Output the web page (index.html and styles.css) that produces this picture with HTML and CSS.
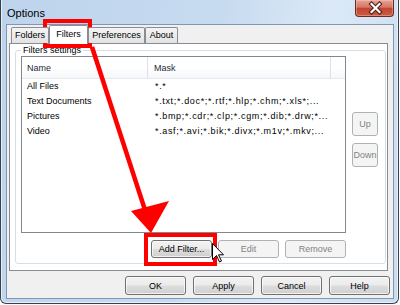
FILE: index.html
```html
<!DOCTYPE html>
<html lang="en">
<head>
    <meta charset="UTF-8">
    <title>Options</title>
    <link rel="stylesheet" href="styles.css">
</head>
<body>
    <div class="screen">
        <div class="window">
            <div class="titlebar">
                <span class="title">Options</span>
                <div class="close">
                    <svg width="39" height="16" viewBox="0 0 39 16">
                        <path d="M15.5 4 L23.5 12 M23.5 4 L15.5 12" stroke="#4a1a14" stroke-width="4.2" stroke-linecap="square" fill="none"/>
                        <path d="M15.5 4 L23.5 12 M23.5 4 L15.5 12" stroke="#fff" stroke-width="2.2" stroke-linecap="square" fill="none"/>
                    </svg>
                </div>
            </div>
            <div class="client">
                <div class="tabctl">
                    <div class="tabs">
                        <div class="tab tab-folders">Folders</div>
                        <div class="tab tab-filters active">Filters</div>
                        <div class="tab tab-prefs">Preferences</div>
                        <div class="tab tab-about">About</div>
                    </div>
                    <div class="tabpanel">
                        <fieldset class="group">
                            <legend>Filters settings</legend>
                            <div class="group-body">
                                <div class="listview">
                                    <div class="lv-header">
                                        <div class="col-name">Name</div>
                                        <div class="col-mask">Mask</div>
                                        <div class="col-rest"></div>
                                    </div>
                                    <div class="lv-row">
                                        <div class="col-name">All Files</div>
                                        <div class="col-mask">*.*</div>
                                    </div>
                                    <div class="lv-row">
                                        <div class="col-name">Text Documents</div>
                                        <div class="col-mask">*.txt;*.doc*;*.rtf;*.hlp;*.chm;*.xls*;...</div>
                                    </div>
                                    <div class="lv-row">
                                        <div class="col-name">Pictures</div>
                                        <div class="col-mask">*.bmp;*.cdr;*.clp;*.cgm;*.dib;*.drw;*...</div>
                                    </div>
                                    <div class="lv-row">
                                        <div class="col-name">Video</div>
                                        <div class="col-mask">*.asf;*.avi;*.bik;*.divx;*.m1v;*.mkv;...</div>
                                    </div>
                                </div>
                                <div class="side-buttons">
                                    <button class="btn btn-side" disabled>Up</button>
                                    <button class="btn btn-side" disabled>Down</button>
                                </div>
                                <div class="list-buttons">
                                    <button class="btn">Add Filter...</button>
                                    <button class="btn" disabled>Edit</button>
                                    <button class="btn" disabled>Remove</button>
                                </div>
                            </div>
                        </fieldset>
                    </div>
                </div>
                <div class="dlg-buttons">
                    <button class="btn btn-dlg">OK</button>
                    <button class="btn btn-dlg">Apply</button>
                    <button class="btn btn-dlg">Cancel</button>
                    <button class="btn btn-dlg">Help</button>
                </div>
            </div>
        </div>

        <!-- red marks drawn over the screenshot -->
        <div class="mark mark-tab"></div>
        <div class="mark mark-btn"></div>
        <svg class="arrow" width="400" height="305" viewBox="0 0 400 305">
            <line x1="92" y1="47" x2="145" y2="210" stroke="#f00" stroke-width="4.5"/>
            <polygon points="131,211 169,201 151,233" fill="#f00"/>
        </svg>
        <svg class="cursor" width="13" height="21" viewBox="0 0 13 21">
            <path d="M0.5 0.5 L0.5 16.5 L4.5 12.5 L7.5 19 L9.5 18 L6.5 11.8 L11.5 11.8 Z" fill="#fff" stroke="#000" stroke-width="1"/>
        </svg>
    </div>
</body>
</html>
```

FILE: styles.css
```css
body {
    margin: 0;
    background: #fff;
    font-family: "Liberation Sans", Arial, sans-serif;
    font-size: 9px;
    color: #000;
}
.screen {
    position: relative;
    width: 400px;
    height: 305px;
}
/* window frame */
.window {
    width: 399px;
    height: 304px;
    box-sizing: border-box;
    border: 1px solid #3a3f48;
    border-top: 0;
    border-radius: 0 0 6px 6px;
    background: linear-gradient(100deg, #bdd4ec 0%, #c7dbf0 50%, #dbe9f7 74%, #c8dcf0 100%);
    box-shadow: inset 1px 0 #e6f0fa, inset -1px 0 #e6f0fa, inset 0 -1px #e6f0fa;
    display: flex;
    flex-direction: column;
}
.titlebar {
    height: 24px;
    display: flex;
    justify-content: space-between;
    align-items: flex-start;
}
.title {
    padding: 7px 0 0 6px;
    font-size: 11px;
    line-height: 13px;
}
.close {
    width: 39px;
    height: 17px;
    margin-right: 4px;
    box-sizing: border-box;
    border: 1px solid #6d2a23;
    border-top: 0;
    border-radius: 0 0 4px 4px;
    background: linear-gradient(#e6a496 0%, #d47763 45%, #c2462f 52%, #cc5c43 100%);
    box-shadow: inset 0 0 0 1px rgba(255, 220, 210, 0.35);
}
.close svg {
    display: block;
}
.client {
    margin: 0 4px 0 5px;
    height: 275px;
    box-sizing: border-box;
    border: 1px solid #8396b0;
    background: #f0f0f0;
    display: flex;
    flex-direction: column;
}
/* tab control */
.tabctl {
    margin: 0 5px 0 2px;
}
.tabs {
    display: flex;
    height: 18px;
    padding-left: 2px;
    position: relative;
    z-index: 1;
}
.tab {
    box-sizing: border-box;
    height: 16px;
    margin-top: 2px;
    border: 1px solid #898c95;
    border-bottom: 0;
    border-radius: 2px 2px 0 0;
    background: linear-gradient(#f4f4f4, #e2e2e2);
    text-align: center;
    line-height: 14px;
}
.tab.active {
    height: 19px;
    margin-top: 0;
    background: #fff;
    line-height: 17px;
}
.tab-folders { width: 38px; }
.tab-filters { width: 39px; }
.tab-prefs { width: 57px; }
.tab-about { width: 33px; }
.tabpanel {
    border: 1px solid #898c95;
    background: #fff;
    padding: 0 1px 6px 5px;
}
.group {
    margin: 0;
    border: 1px solid #d5dfe5;
    border-radius: 3px;
    padding: 0 7px 5px 5px;
}
.group legend {
    padding: 1px 2px 0;
    line-height: 11px;
}
.group-body {
    display: grid;
    grid-template-columns: 325px 26px;
    column-gap: 6px;
    row-gap: 7px;
}
/* list view */
.listview {
    height: 177px;
    box-sizing: border-box;
    border: 1px solid #828790;
    background: #fff;
}
.lv-header {
    display: flex;
    height: 22px;
    box-sizing: border-box;
    border-bottom: 1px solid #e5e8ec;
    background: linear-gradient(#fff 50%, #f6f7f9);
}
.lv-header > div {
    padding-top: 2px;
    line-height: 18px;
    color: #1e2a3a;
}
.col-name {
    width: 126px;
    box-sizing: border-box;
    padding-left: 5px;
    white-space: nowrap;
}
.col-mask {
    width: 183px;
    box-sizing: border-box;
    padding-left: 6px;
    white-space: nowrap;
}
.lv-header .col-name,
.lv-header .col-mask {
    border-right: 1px solid #dde2e8;
}
.lv-row {
    display: flex;
    height: 15px;
    line-height: 14px;
}
.lv-row .col-mask {
    padding-left: 7px;
    letter-spacing: 0.65px;
}
.side-buttons {
    display: flex;
    flex-direction: column;
    gap: 7px;
    margin-top: 56px;
}
.list-buttons {
    display: flex;
    justify-content: flex-end;
    gap: 6px;
}
/* buttons */
.btn {
    width: 61px;
    height: 18px;
    padding: 0;
    box-sizing: border-box;
    border: 1px solid #707070;
    border-radius: 3px;
    background: linear-gradient(#f2f2f2 0%, #ebebeb 48%, #dddddd 52%, #cfcfcf 100%);
    box-shadow: inset 0 0 0 1px rgba(255, 255, 255, 0.7);
    font-family: inherit;
    font-size: 9px;
    color: #000;
}
.btn:disabled {
    border-color: #adb2b5;
    background: #f4f4f4;
    box-shadow: none;
    color: #838383;
}
.btn-side {
    width: 26px;
    height: 24px;
}
.dlg-buttons {
    display: flex;
    justify-content: flex-end;
    gap: 7px;
    margin: 5px 3px 0 0;
}
.btn-dlg {
    height: 19px;
}
/* annotations */
.mark {
    position: absolute;
    box-sizing: border-box;
    border: 4px solid #f00;
}
.mark-tab {
    left: 43px;
    top: 19px;
    width: 49px;
    height: 29px;
}
.mark-btn {
    left: 144px;
    top: 233px;
    width: 73px;
    height: 33px;
}
.arrow {
    position: absolute;
    left: 0;
    top: 0;
    pointer-events: none;
}
.cursor {
    position: absolute;
    left: 212px;
    top: 243px;
}
```
